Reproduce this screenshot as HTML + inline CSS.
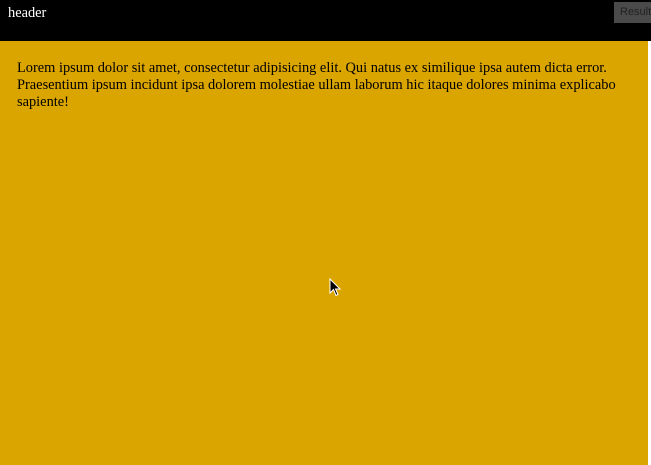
<!DOCTYPE html>
<html><head><style>
html,body{margin:0;padding:0;width:651px;height:465px;overflow:hidden;background:#fff;}
.hdr{position:absolute;left:0;top:0;width:651px;height:41px;background:#000;}
.hdr span{position:absolute;left:8px;top:5px;color:#fff;font:14.4px "Liberation Serif",serif;}
.res{position:absolute;left:614px;top:2px;width:37px;height:21px;background:#4a4a4a;color:#222;font:11px "Liberation Sans",sans-serif;line-height:21px;padding-left:6px;box-sizing:border-box;overflow:hidden;white-space:nowrap;}
.main{position:absolute;left:0;top:41px;width:648px;height:424px;background:#dba500;}
.main p{margin:0;position:absolute;left:17px;top:19px;width:608px;font:14.4px/17px "Liberation Serif",serif;color:#000;}
svg{position:absolute;left:329px;top:278px;}
</style></head><body>
<div class="hdr"><span>header</span><div class="res">Result</div></div>
<div class="main"><p>Lorem ipsum dolor sit amet, consectetur adipisicing elit. Qui natus ex similique ipsa autem dicta error. Praesentium ipsum incidunt ipsa dolorem molestiae ullam laborum hic itaque dolores minima explicabo sapiente!</p></div>
<svg width="14" height="20" viewBox="0 0 14 20"><path d="M1 1 L1 15 L4.5 11.5 L7 17.5 L9 16.5 L6.5 11 L11 11 Z" fill="#000" stroke="#fff" stroke-width="1"/></svg>
</body></html>
